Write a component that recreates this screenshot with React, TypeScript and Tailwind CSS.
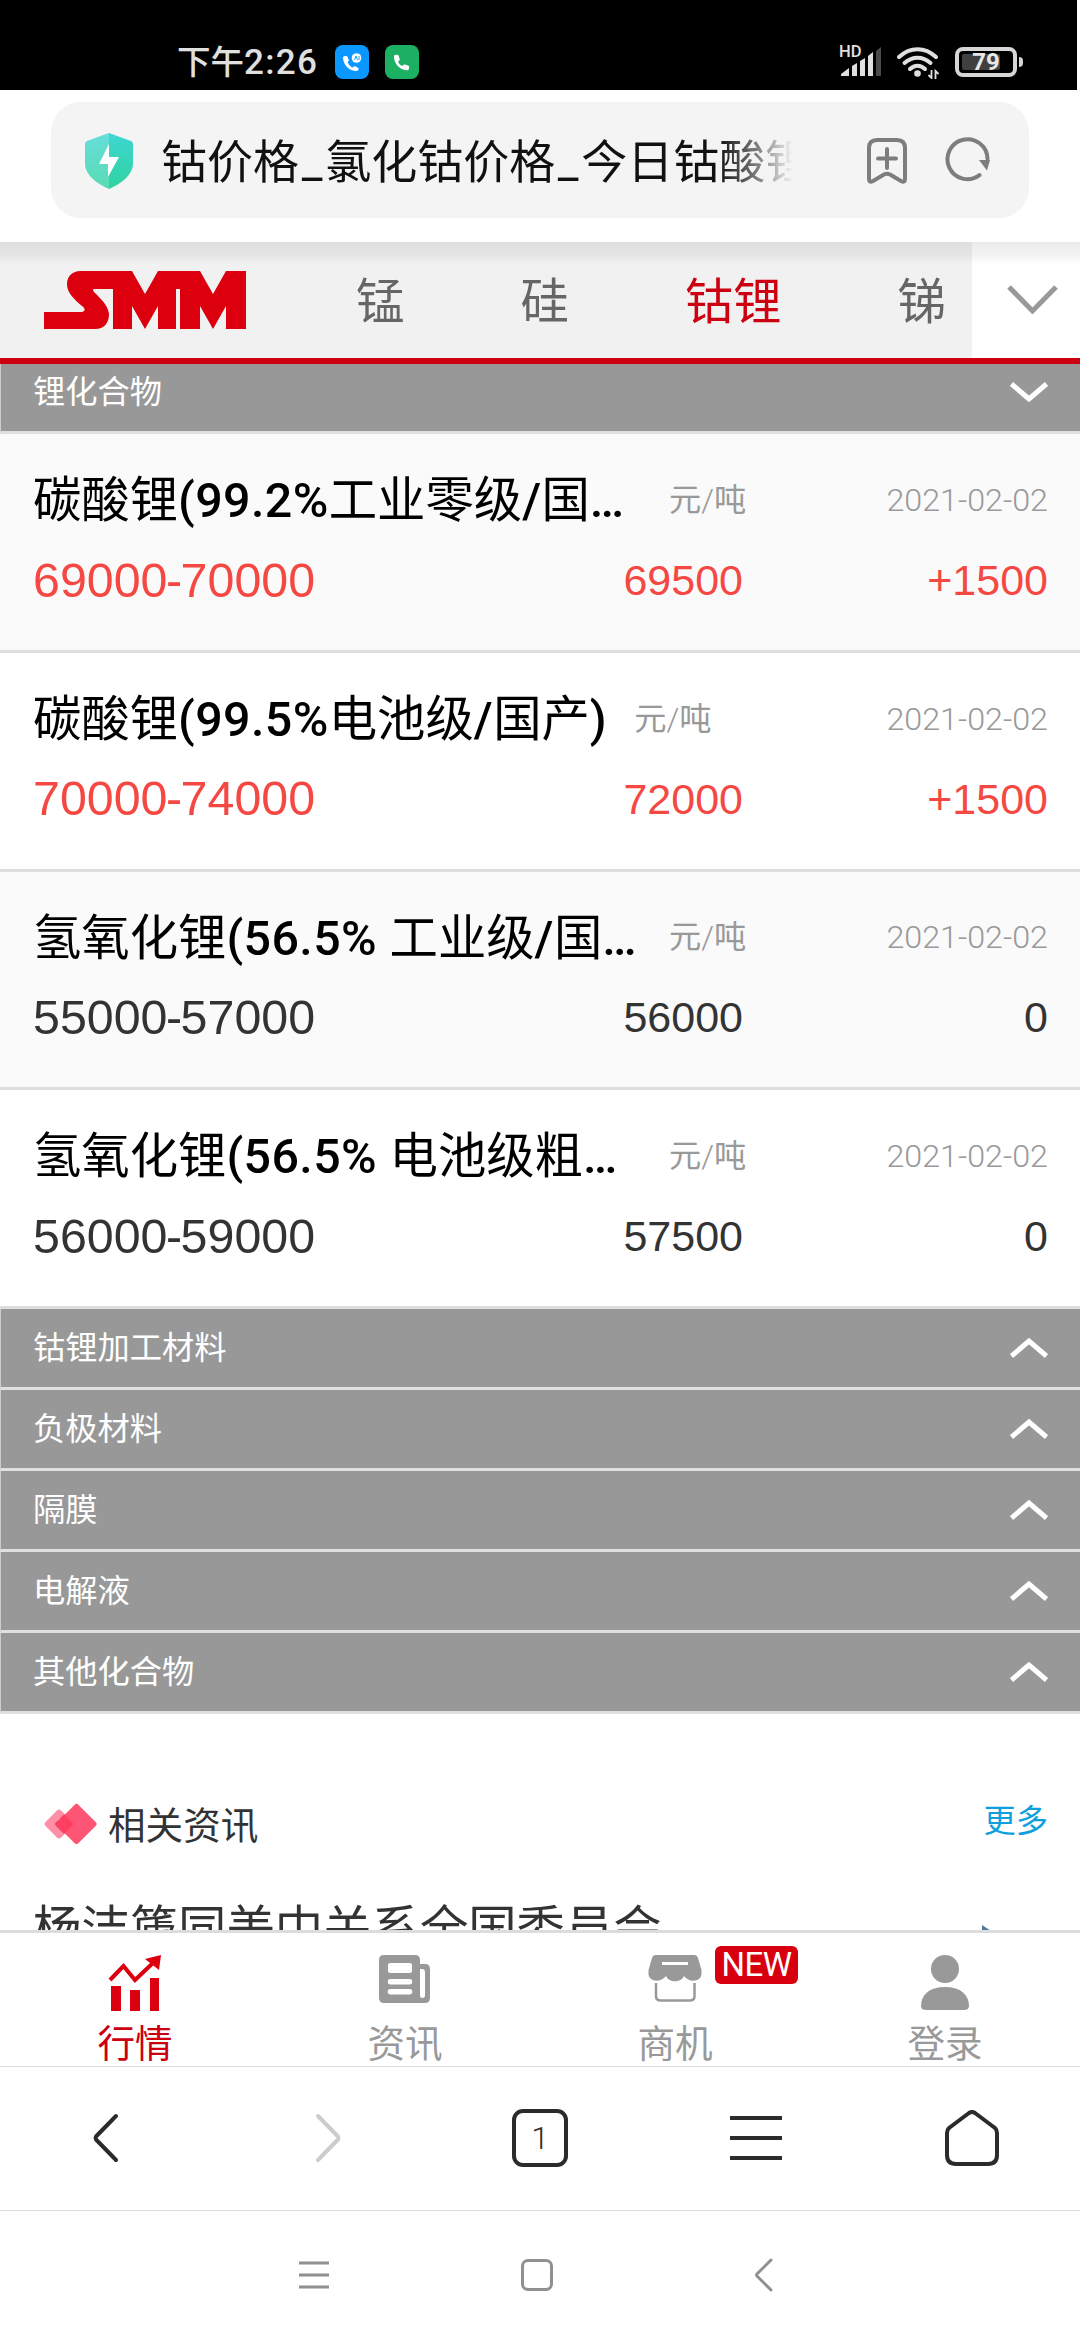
const CJK_FONT = "font-[Roboto,'Noto_Sans_CJK_SC',sans-serif]"

interface PriceItem {
  name: string
  range: [string, string]
  average: string
  change: string
}

const prices: PriceItem[] = [
  { name: '碳酸锂(99.2%工业零级/国…', range: ['69000', '70000'], average: '69500', change: '+1500' },
  { name: '碳酸锂(99.5%电池级/国产)', range: ['70000', '74000'], average: '72000', change: '+1500' },
  { name: '氢氧化锂(56.5% 工业级/国…', range: ['55000', '57000'], average: '56000', change: '0' },
  { name: '氢氧化锂(56.5% 电池级粗…', range: ['56000', '59000'], average: '57500', change: '0' },
]

const collapsed = ['钴锂加工材料', '负极材料', '隔膜', '电解液', '其他化合物']

function StatusBar() {
  return (
    <div className="flex h-[90px] w-[1077px] shrink-0 items-start bg-black pl-[177px] pr-[54px] text-[#e0e0e0]">
      <span className="mt-[43px] w-[158px] whitespace-nowrap text-[33.5px] font-medium leading-[40px]">
        下午<span className="text-[35px] tracking-[1.3px]">2:26</span>
      </span>
      <svg className="mt-[45px] h-[34px] w-[34px]" viewBox="0 0 34 34">
        <rect width="34" height="34" rx="8" fill="#0a97ff" />
        <path d="M8 12c0 8 6 14 14 14 1.500-1 2-2 1.500-2.800l-3.500-2.200-2.500 1.500c-2.500-1.200-4-3-4.800-5.200l1.300-2-1.700-3.800c-1.500-.8-3.300-.3-4.300.5z" fill="#fff" />
        <circle cx="21.500" cy="13" r="4.800" fill="#fff" />
        <path d="M19.500 15l1.500-4 1.500 4M24 11v4" stroke="#0a97ff" strokeWidth="0.900" fill="none" />
      </svg>
      <svg className="ml-4 mt-[45px] h-[34px] w-[34px]" viewBox="0 0 34 34">
        <rect width="34" height="34" rx="8" fill="#1cb062" />
        <path d="M9 10.500c-.5 8 5.500 15 14 14.700 1-.8 1.500-2.700 1-4.200l-4.500-1.700-2.300 1.700c-2-.9-3.300-2.300-4-4.300l1.700-2.200-1.600-4.400c-1.500-.7-3.300-.5-4.300.4z" fill="#fff" />
      </svg>
      <div className="ml-auto flex items-start pt-[45px]">
        <div className="relative h-[34px] w-[44px]">
          <span className="absolute left-0 top-0 text-[16.5px] font-medium leading-[14px]">HD</span>
          <svg className="h-[34px] w-[44px]" viewBox="0 0 44 34">
            <path d="M2 31v-2l8-6v8zM13 31V21l5-3v13zM21 31V16l5-3v18zM29 31V11l5-4v24z" fill="#e0e0e0" />
            <path d="M37 31V6l5-4v29z" fill="#4a4a4a" />
          </svg>
        </div>
        <svg className="ml-[13px] h-[34px] w-[44px]" viewBox="0 0 44 34" fill="none" stroke="#e0e0e0" strokeWidth="4" strokeLinecap="round">
          <path d="M3 12C14 1.500 29 1.500 40 12M8.500 18c8-7 18-7 26 0M14 24c4.500-4.500 10.500-4.500 15 0" />
          <circle cx="21.500" cy="28.500" r="3.300" fill="#e0e0e0" stroke="none" />
          <path d="M35.500 25v8l-3-3M39.500 34v-8l3 3" strokeWidth="1.800" strokeLinecap="butt" />
        </svg>
        <div className="ml-[15px] mt-[2px] flex items-center">
          <div className="relative flex h-[30px] w-[62px] items-center justify-center rounded-[8px] border-4 border-[#d6d6d6]">
            <div className="absolute left-[3px] top-[3px] h-4 w-[38px] rounded-xs bg-[#404040]" />
            <span className="relative text-[24px] font-bold leading-none text-[#e8e8e8]">79</span>
          </div>
          <div className="ml-[2px] h-[10px] w-[4px] rounded-r-sm bg-[#d6d6d6]" />
        </div>
      </div>
    </div>
  )
}

function AddressBar() {
  return (
    <div className="h-[152px] shrink-0 bg-white pl-[51px] pr-[51px] pt-3">
      <div className="flex h-[116px] items-center rounded-[30px] bg-[#f4f4f4] pl-[34px]">
        <svg className="mt-[2px] h-[56px] w-[48px]" viewBox="0 0 48 56">
          <defs>
            <linearGradient id="shield" x1="0" y1="0" x2="0" y2="1">
              <stop offset="0" stopColor="#3fd6d2" />
              <stop offset="1" stopColor="#2fd3a0" />
            </linearGradient>
          </defs>
          <path d="M24 0L46 8Q48 9 48 11V30C48 43 35 51 24 56C13 51 0 43 0 30V11Q0 9 2 8Z" fill="url(#shield)" />
          <path d="M24 0L2 8Q0 9 0 11V30C0 43 13 51 24 56Z" fill="#fff" opacity="0.200" />
          <path d="M24 11L14 31H23V44L34 24H24Z" fill="#fff" />
        </svg>
        <span className="ml-[28px] mt-1 w-[632px] overflow-hidden whitespace-nowrap bg-linear-to-r from-[#111] from-88% to-[#f4f4f4] to-100% bg-clip-text text-[46px] leading-[64px] text-transparent">
          钴价格<span className="px-[2.7px]">_</span>氯化钴价格<span className="px-[2.7px]">_</span>今日钴酸锂
        </span>
        <svg className="ml-[73px] h-[48px] w-[44px]" viewBox="0 0 44 48" fill="none" stroke="#7d7d7d" strokeWidth="4" strokeLinejoin="round" strokeLinecap="round">
          <path d="M3 43V12Q3 4 11 4H31Q39 4 39 12V43Q39 47 35 45L24 38.500Q21 37 18 38.500L7 45Q3 47 3 43Z" />
          <path d="M21 13v19M12 22.500h18" />
        </svg>
        <svg className="ml-[35px] h-[46px] w-[46px]" viewBox="0 0 46 46">
          <path d="M34.500 38.200A20 20 0 1 1 42.500 22" fill="none" stroke="#7d7d7d" strokeWidth="4" strokeLinecap="round" />
          <path d="M34 23H45L42 33.500Z" fill="#7d7d7d" />
        </svg>
      </div>
    </div>
  )
}

function CategoryNav() {
  return (
    <div className="relative flex h-[122px] shrink-0 border-b-[6px] border-[#cc0010] bg-[#f1f1f1] text-[48.4px] leading-[122px] text-[#666]">
      <svg className="ml-[44px] mt-[29px] h-[58px] w-[202px]" viewBox="0 0 202 58" fill="#dc000f">
        <path d="M0 41H38C42 40 41 37 38 35C30 28 23 22 23 13C23 5 29 0 36 0H88L101 23L114 0H156L169 23L182 0H202V58H182V35L169 58L156 35V58H136V18H132V58H114V35L101 58L88 35V58H69V18H50Q48 18 50 21C57 28 64 34 65 43C65 52 60 58 51 58H0Z" />
      </svg>
      <span className="ml-[110px]">锰</span>
      <span className="ml-[116px]">硅</span>
      <span className="ml-[116px] text-[#cc0010]">钴锂</span>
      <span className="ml-[116px]">锑</span>
      <div className="ml-auto flex w-[108px] items-center bg-white pl-[35px]">
        <svg className="h-[30px] w-[51px]" viewBox="0 0 51 30" fill="none" stroke="#999" strokeWidth="5">
          <path d="M2 2L25.500 26L49 2" />
        </svg>
      </div>
      <div className="absolute inset-x-0 top-0 h-[22px] bg-linear-to-b from-black/8 via-black/5 via-60% to-transparent" />
    </div>
  )
}

function GroupHeader({ title, open = false }: { title: string; open?: boolean }) {
  return (
    <div className="flex h-[81px] shrink-0 items-center border-b-[3px] border-l border-b-[#e0e0e0] border-l-[#ccc] bg-[#989898] pl-[32px] pr-8 text-[32.250px] leading-[46px] text-white">
      <span>{title}</span>
      <svg className="mb-px ml-auto h-[20px] w-[38px]" viewBox="0 0 38 20" fill="none" stroke="#fff" strokeWidth="5">
        {open ? <path d="M1.500 2L19 17L36.500 2" /> : <path d="M1.500 18L19 3L36.500 18" />}
      </svg>
    </div>
  )
}

// Latin runs are medium weight, Chinese runs stay regular
function ProductName({ name }: { name: string }) {
  const runs = name.split(/([\u4e00-\u9fff]+)/).filter(Boolean)
  return (
    <span className={`text-[48.375px] leading-[68px] text-black ${name.endsWith('…') ? 'w-[609px]' : ''}`}>
      {runs.map((run, i) =>
        /[\u4e00-\u9fff]/.test(run) ? (
          run
        ) : (
          <span key={i} className="font-medium tracking-[0.4px]">{run}</span>
        )
      )}
    </span>
  )
}

function PriceRow({ item, index }: { item: PriceItem; index: number }) {
  const color = item.change.startsWith('+') ? 'text-[#f54842]' : 'text-[#333]'
  return (
    <div
      className={`h-[218.750px] shrink-0 border-b-[3px] border-b-[#dedede] pl-[33px] pr-8 pt-[32px] ${index % 2 === 0 ? 'bg-[#fafafa]' : 'bg-white'}`}
    >
      <div className="flex h-[70px] items-center whitespace-nowrap">
        <ProductName name={item.name} />
        <span className="mb-[2px] ml-[27px] text-[32.250px] text-[#999]">
          元<span className="font-light">/</span>吨
        </span>
        <span className="mb-[2px] ml-auto text-[32.250px] font-light text-[#999]">2021-02-02</span>
      </div>
      <div className={`mt-[14px] flex h-[60px] items-center font-['Liberation_Sans',Arial,sans-serif] ${color}`}>
        <span className="text-[48.375px]">
          {item.range[0]}
          <span className="-mx-[1.5px]">-</span>
          {item.range[1]}
        </span>
        <span className="ml-auto text-[43px]">{item.average}</span>
        <span className="w-[305px] text-right text-[43px]">{item.change}</span>
      </div>
    </div>
  )
}

function News() {
  return (
    <div className="h-[216px] shrink-0 overflow-hidden bg-white pl-[33px] pr-8 pt-[80px]">
      <div className="flex h-[60px] items-center">
        <svg className="ml-[11px] h-[42px] w-[54px]" viewBox="0 0 54 42">
          <rect x="4" y="10" width="22" height="22" rx="3" transform="rotate(45 15 21)" fill="#fd8fa6" />
          <rect x="17.500" y="6" width="30" height="30" rx="3" transform="rotate(45 32.500 21)" fill="#fd5674" />
          <path d="M15 17l4-5Q20 11 21 12l7 7q2 2 0 4l-7 7q-1 1-2 0l-7-7q-2-2 0-4z" fill="#fd3f62" />
        </svg>
        <span className="ml-[10px] mt-[3px] text-[37.600px] leading-[54px] text-[#333]">相关资讯</span>
        <span className="mb-[5px] ml-auto text-[32.250px] text-[#109fdd]">更多</span>
      </div>
      <div className="mt-[42px] flex">
        <span className="text-[48.375px] leading-[68px] text-[#333]">杨洁篪同美中关系全国委员会</span>
        <svg className="ml-[319px] mt-[29px] h-[10px] w-4" viewBox="0 0 16 10">
          <path d="M1 0L10 6H1Z" fill="#4a7a9d" />
        </svg>
      </div>
    </div>
  )
}

function TabBar() {
  const tab = 'relative flex flex-1 flex-col items-center pt-[22px]'
  const label = 'mt-[4px] text-[37.600px] leading-[54px]'
  return (
    <div className="flex h-[137px] shrink-0 overflow-hidden border-b border-t-[3px] border-[#dcdcdc] bg-white text-[#999]">
      <div className={`${tab} text-[#cc0010]`}>
        <svg className="h-[58px] w-[54px] shrink-0" viewBox="0 0 54 58" fill="#dc000f">
          <path d="M3 31h10v25H3zM22 35h10v21H22zM42 23h9v33h-9z" />
          <path d="M2 25L15.500 11L27 25L46 7" fill="none" stroke="#dc000f" strokeWidth="4" />
          <path d="M53 0L37 4L51 15Z" />
        </svg>
        <span className={label}>行情</span>
      </div>
      <div className={tab}>
        <svg className="h-[58px] w-[52px] shrink-0" viewBox="0 0 52 58">
          <path fillRule="evenodd" fill="#999" d="M5 0H36Q41 0 41 5V9H46Q51 9 51 14V43Q51 48 46 48H5Q0 48 0 43V5Q0 0 5 0ZM11 8Q9 8 9 10V16Q9 18 11 18H31Q33 18 33 16V10Q33 8 31 8ZM11.500 24A2.700 2.700 0 0 0 11.500 29.500H30.500A2.700 2.700 0 0 0 30.500 24ZM11.500 34A2.700 2.700 0 0 0 11.500 39.500H30.500A2.700 2.700 0 0 0 30.500 34ZM41 14V40Q41 43 43.500 43T46 40V17Q46 14 43 14Z" />
        </svg>
        <span className={label}>资讯</span>
      </div>
      <div className={tab}>
        <svg className="h-[58px] w-[54px] shrink-0" viewBox="0 0 54 58">
          <path d="M8 0H46Q49 0 50 3L53.500 15V19C53 27 41 28 36 21C33 28 21 28 18 21C13 28 1 27 .5 19V15L4 3Q5 0 8 0Z" fill="#999" />
          <path d="M14 8.500h26" stroke="#fff" strokeWidth="3" />
          <path d="M8 28V41Q8 45.500 12.500 45.500H42Q46.500 45.500 46.500 41V28" fill="none" stroke="#999" strokeWidth="2.500" />
        </svg>
        <span className={label}>商机</span>
        <span className="absolute left-[175px] top-[13px] h-[38px] w-[83px] rounded-[6px] bg-[#d8000f] text-center text-[33px] leading-[38px] tracking-[-0.5px] text-white">
          NEW
        </span>
      </div>
      <div className={tab}>
        <svg className="h-[58px] w-[50px] shrink-0" viewBox="0 0 50 58" fill="#999">
          <circle cx="25" cy="14" r="14" />
          <path d="M25 32C41 32 49 40 49 51Q49 55 44 55H6Q1 55 1 51C1 40 9 32 25 32Z" />
        </svg>
        <span className={label}>登录</span>
      </div>
    </div>
  )
}

function BrowserBar() {
  return (
    <div className="flex h-[144px] shrink-0 items-center border-b border-[#dcdcdc] bg-white pb-[2px] pl-[92px]">
      <svg className="h-[50px] w-[28px]" viewBox="0 0 28 50" fill="none" stroke="#2b2b2b" strokeWidth="4" strokeLinecap="round" strokeLinejoin="round">
        <path d="M24 3L4 23.500Q3 25 4 26.500L24 47" />
      </svg>
      <svg className="ml-[194px] h-[50px] w-[28px]" viewBox="0 0 28 50" fill="none" stroke="#ccc" strokeWidth="4" strokeLinecap="round" strokeLinejoin="round">
        <path d="M4 3L24 23.500Q25 25 24 26.500L4 47" />
      </svg>
      <div className="ml-[170px] flex h-[58px] w-[56px] items-center justify-center rounded-[11px] border-4 border-[#2b2b2b] text-[32px] font-light leading-none text-[#2b2b2b]">
        1
      </div>
      <svg className="ml-[162px] h-[50px] w-[52px]" viewBox="0 0 52 50" fill="#2b2b2b">
        <path d="M0 3h52v4H0zM0 23h52v4H0zM0 43h52v4H0z" />
      </svg>
      <svg className="ml-[162px] h-[60px] w-[56px]" viewBox="0 0 56 60" fill="none" stroke="#2b2b2b" strokeWidth="4" strokeLinejoin="round">
        <path d="M3 25Q3 22 5 20L25 5Q28 3 31 5L51 20Q53 22 53 25V47Q53 56 44 56H12Q3 56 3 47Z" />
      </svg>
    </div>
  )
}

function SystemNav() {
  return (
    <div className="flex grow items-start bg-white pl-[299px] pt-[47px]">
      <svg className="h-[34px] w-[30px]" viewBox="0 0 30 34" fill="#909090">
        <path d="M0 3.500h30v3H0zM0 15.500h30v3H0zM0 27.500h30v3H0z" />
      </svg>
      <div className="ml-[192px] mt-px h-8 w-8 rounded-[7px] border-3 border-[#909090]" />
      <svg className="ml-[201px] h-[34px] w-[20px]" viewBox="0 0 20 34" fill="none" stroke="#909090" strokeWidth="3" strokeLinecap="round">
        <path d="M17 2L3 16Q2 17 3 18L17 32" />
      </svg>
    </div>
  )
}

export default function App() {
  return (
    <div className={`flex h-[2340px] w-[1080px] flex-col overflow-hidden bg-white ${CJK_FONT}`}>
      <StatusBar />
      <AddressBar />
      <CategoryNav />
      {/* Scrolled list, its first header is partly under the nav */}
      <div className="flex h-[1566px] shrink-0 flex-col justify-end overflow-hidden">
        <GroupHeader title="锂化合物" open />
        {prices.map((item, index) => (
          <PriceRow key={item.name} item={item} index={index} />
        ))}
        {collapsed.map((title) => (
          <GroupHeader key={title} title={title} />
        ))}
        <News />
      </div>
      <TabBar />
      <BrowserBar />
      <SystemNav />
    </div>
  )
}
